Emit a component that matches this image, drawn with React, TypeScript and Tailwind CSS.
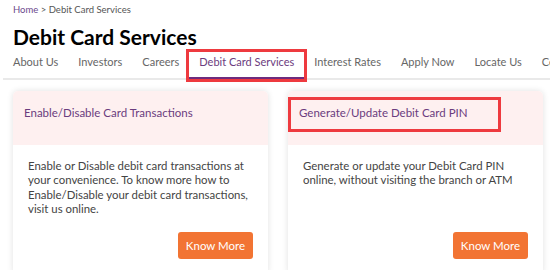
import React from "react";

const font = { fontFamily: 'Lato, "Noto Sans", sans-serif' };

const navItems = ["About Us", "Investors", "Careers", "Debit Card Services", "Interest Rates", "Apply Now", "Locate Us", "Contact Us"];

function Card({ title, body, boxed }: { title: string; body: string; boxed?: boolean }) {
  return (
    <div className="w-[255px] shrink-0 rounded-[5px] bg-white shadow-[0_0_6px_rgba(0,0,0,0.12)] overflow-visible">
      <div className="relative h-[54px] rounded-t-[5px] bg-[#fef0f0] px-[11px] pt-[13px] text-[11.5px] text-[#6b3c7e]">
        {title}
        {boxed && (
          <div className="absolute left-0 top-[6px] h-[35px] w-[213px] border-[3px] border-[#ee3a3f]" />
        )}
      </div>
      <div className="flex h-[130px] flex-col px-[15px] pt-[14px]">
        <p className="text-[11.4px] leading-[14.5px] text-[#444]">{body}</p>
        <div className="mt-auto mb-[16px] flex justify-end">
          <button className="h-[27px] w-[75px] rounded-[3px] bg-[#f27433] text-[11.5px] text-white">Know More</button>
        </div>
      </div>
    </div>
  );
}

export default function App() {
  return (
    <div className="h-[270px] w-[550px] overflow-hidden bg-white" style={font}>
      <div className="pl-[13px] pt-[3px] text-[9.5px] text-[#555]">
        <span className="text-[#6c4a8e]">Home</span> &gt; Debit Card Services
      </div>
      <h1 className="pl-[13px] pt-[7px] text-[21px] font-bold leading-[26px] text-black">Debit Card Services</h1>
      <div className="ml-[3px] mt-[2px] flex whitespace-nowrap border-b-2 border-[#e9e9e9]">
        {navItems.map((n) => {
          const active = n === "Debit Card Services";
          return (
            <div
              key={n}
              className={
                active
                  ? "relative -mb-[2px] border-b-[3px] border-[#6e2c7e] px-[10px] pb-[5px] pt-[2px] text-[11px] text-[#6b3c7e]"
                  : "px-[10px] pb-[7px] pt-[2px] text-[11px] text-[#666]"
              }
            >
              {n}
              {active && <div className="absolute -left-[3px] -right-[3px] -top-[3px] -bottom-[5px] border-[3px] border-[#ee3a3f]" />}
            </div>
          );
        })}
      </div>
      <div className="mt-[11px] flex gap-[20px] pl-[13px]">
        <Card
          title="Enable/Disable Card Transactions"
          body="Enable or Disable debit card transactions at your convenience. To know more how to Enable/Disable your debit card transactions, visit us online."
        />
        <Card
          title="Generate/Update Debit Card PIN"
          body="Generate or update your Debit Card PIN online, without visiting the branch or ATM"
          boxed
        />
      </div>
    </div>
  );
}
